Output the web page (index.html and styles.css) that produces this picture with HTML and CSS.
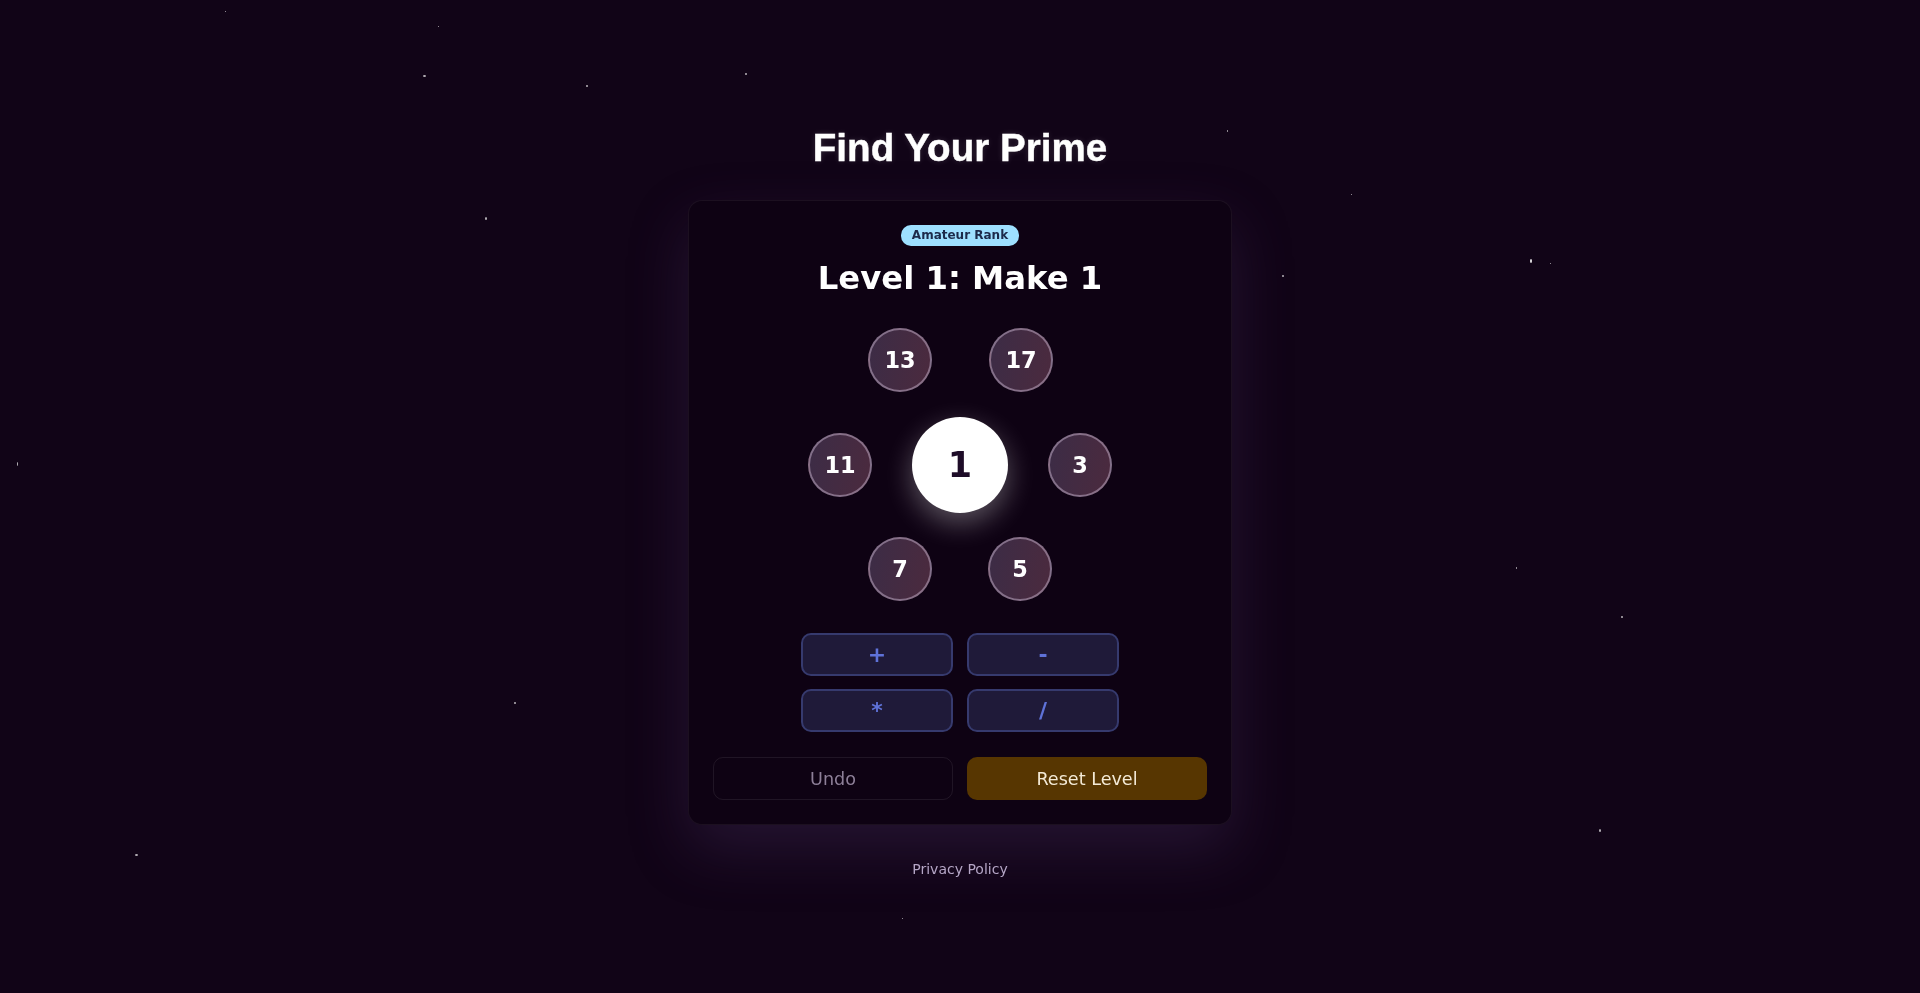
FILE: index.html
```html
<!DOCTYPE html>
<html lang="en">
<head>
<meta charset="utf-8">
<title>Find Your Prime</title>
<link rel="stylesheet" href="styles.css">
</head>
<body>
<div class="stars">
  <span class="star s1"></span><span class="star s2"></span><span class="star s3"></span>
  <span class="star s4"></span><span class="star s5"></span><span class="star s6"></span>
  <span class="star s7"></span><span class="star s8"></span><span class="star s9"></span>
  <span class="star s10"></span><span class="star s11"></span><span class="star s12"></span>
  <span class="star s13"></span><span class="star s14"></span><span class="star s15"></span>
  <span class="star s16"></span><span class="star s17"></span><span class="star s18"></span>
</div>
<main class="page">
  <h1 class="title">Find Your Prime</h1>
  <section class="card">
    <span class="badge">Amateur Rank</span>
    <h2 class="level">Level 1: Make 1</h2>
    <div class="board">
      <button class="num n13">13</button>
      <button class="num n17">17</button>
      <button class="num n11">11</button>
      <button class="target">1</button>
      <button class="num n3">3</button>
      <button class="num n7">7</button>
      <button class="num n5">5</button>
    </div>
    <div class="ops">
      <button class="op">+</button>
      <button class="op">-</button>
      <button class="op">*</button>
      <button class="op">/</button>
    </div>
    <div class="actions">
      <button class="undo">Undo</button>
      <button class="reset">Reset Level</button>
    </div>
  </section>
  <a class="privacy" href="#">Privacy Policy</a>
</main>
</body>
</html>
```
FILE: styles.css
```css
* { box-sizing: border-box; }
html, body { margin: 0; padding: 0; }
body {
  background: #110417;
  font-family: "DejaVu Sans", sans-serif;
  color: #fff;
  min-height: 993px;
  overflow: hidden;
}
.stars { position: fixed; inset: 0; pointer-events: none; }
.star {
  position: absolute;
  width: 2px; height: 2px;
  border-radius: 50%;
  background: #fff;
  opacity: 0.7;
}
.s1 { left: 225px; top: 11px; width: 1px; height: 1px; }
.s2 { left: 438px; top: 26px; width: 1px; height: 1px; }
.s3 { left: 423px; top: 75px; width: 3px; height: 2px; }
.s4 { left: 586px; top: 85px; }
.s5 { left: 745px; top: 73px; }
.s6 { left: 1227px; top: 130px; width: 1px; }
.s7 { left: 1351px; top: 194px; width: 1px; height: 1px; }
.s8 { left: 1530px; top: 259px; width: 2px; height: 4px; opacity: 0.9; }
.s9 { left: 1550px; top: 263px; width: 1px; height: 1px; }
.s10 { left: 1282px; top: 275px; }
.s11 { left: 485px; top: 217px; width: 2px; height: 3px; }
.s12 { left: 17px; top: 462px; width: 1px; height: 4px; }
.s13 { left: 1516px; top: 567px; width: 1px; height: 2px; }
.s14 { left: 1621px; top: 616px; }
.s15 { left: 514px; top: 702px; }
.s16 { left: 1599px; top: 829px; width: 2px; height: 3px; }
.s17 { left: 135px; top: 854px; width: 3px; height: 2px; }
.s18 { left: 902px; top: 918px; width: 1px; height: 1px; }

.page {
  position: relative;
  display: flex;
  flex-direction: column;
  align-items: center;
  padding-top: 126px;
}
.title {
  margin: 0 0 30px;
  font-family: "Liberation Sans", Arial, sans-serif;
  font-weight: 700;
  font-size: 38.6px;
  line-height: 44px;
  color: #fff;
  -webkit-text-stroke: 0.4px #fff;
  text-shadow: 0 0 6px rgba(255, 255, 255, 0.15);
}
.card {
  width: 544px;
  padding: 24px;
  border: 1px solid rgba(255, 255, 255, 0.06);
  border-radius: 14px;
  background: #0e0213;
  box-shadow: 0 24px 60px rgba(90, 60, 120, 0.28);
  display: flex;
  flex-direction: column;
  align-items: center;
}
.badge {
  display: inline-block;
  padding: 3px 11px;
  border-radius: 10px;
  background: #9ee0ff;
  color: #1c2a4a;
  font-weight: 700;
  font-size: 12px;
  line-height: 15px;
}
.level {
  margin: 13px 0 0;
  font-size: 32.3px;
  line-height: 38px;
  font-weight: 700;
  color: #fff;
}
.board {
  position: relative;
  width: 300px;
  height: 300px;
  margin-top: 18px;
}
button {
  font-family: "DejaVu Sans", sans-serif;
  cursor: pointer;
}
.num {
  position: absolute;
  width: 64px;
  height: 64px;
  padding: 0;
  border-radius: 50%;
  border: 2px solid rgba(200, 180, 205, 0.5);
  background: linear-gradient(100deg, #3c2c46, #4b2a3e);
  color: #fff;
  font-weight: 700;
  font-size: 22.4px;
  display: flex;
  align-items: center;
  justify-content: center;
}
.n13 { left: 58px; top: 13px; }
.n17 { left: 179px; top: 13px; }
.n11 { left: -2px; top: 118px; }
.n3 { left: 238px; top: 118px; }
.n7 { left: 58px; top: 222px; }
.n5 { left: 178px; top: 222px; }
.target {
  position: absolute;
  left: 102px;
  top: 102px;
  width: 96px;
  height: 96px;
  padding: 0;
  border: none;
  border-radius: 50%;
  background: #fff;
  color: #1e0c28;
  font-weight: 700;
  font-size: 35px;
  box-shadow: 0 10px 28px rgba(255, 255, 255, 0.32);
  display: flex;
  align-items: center;
  justify-content: center;
}
.ops {
  margin-top: 18px;
  display: grid;
  grid-template-columns: 152px 152px;
  grid-auto-rows: 43px;
  gap: 13px 14px;
}
.op {
  border: 2px solid #363a6e;
  border-radius: 10px;
  background: #1f1a39;
  color: #5f72d8;
  font-weight: 700;
  font-size: 22px;
  padding: 0;
}
.actions {
  margin-top: 25px;
  width: 100%;
  display: grid;
  grid-template-columns: 1fr 1fr;
  gap: 14px;
}
.undo, .reset {
  height: 43px;
  border-radius: 10px;
  font-size: 17.6px;
  padding: 0;
}
.undo {
  background: transparent;
  border: 1px solid rgba(255, 255, 255, 0.08);
  color: #8d7f98;
}
.reset {
  background: #573601;
  border: none;
  color: #f4ead6;
}
.privacy {
  margin-top: 36px;
  font-size: 14px;
  line-height: 17px;
  color: #b5a6c6;
  text-decoration: none;
}
```
